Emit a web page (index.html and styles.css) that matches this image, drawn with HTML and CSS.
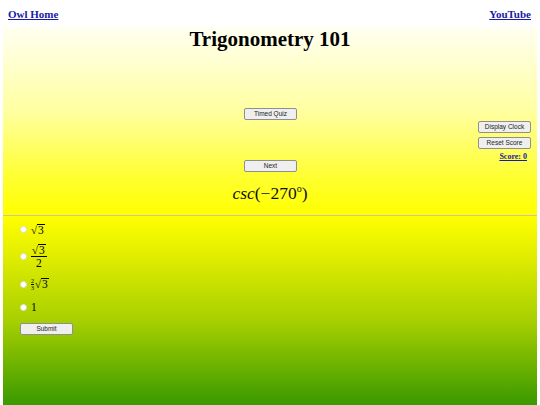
FILE: index.html
```html
<!DOCTYPE html>
<html>
<head>
<meta charset="utf-8">
<link rel="stylesheet" href="styles.css">
</head>
<body>
<div class="page">
  <header class="topbar">
    <a href="#" class="navlink">Owl Home</a>
    <a href="#" class="navlink">YouTube</a>
  </header>
  <section class="upper">
    <h1 class="title">Trigonometry 101</h1>
    <div class="controls">
      <div class="side"></div>
      <div class="center-col">
        <button class="btn">Timed Quiz</button>
        <button class="btn next">Next</button>
      </div>
      <div class="side right-col">
        <button class="btn">Display Clock</button>
        <button class="btn">Reset Score</button>
        <a href="#" class="score">Score: 0</a>
      </div>
    </div>
    <div class="question"><span class="it">csc</span>(−270<sup class="deg">o</sup>)</div>
  </section>
  <hr class="divider">
  <section class="lower">
    <ul class="answers">
      <li class="ans"><span class="radio"></span><span class="math"><span class="rad">√</span><span class="over">3</span></span></li>
      <li class="ans"><span class="radio"></span><span class="math frac"><span class="num"><span class="rad">√</span><span class="over">3</span></span><span class="den">2</span></span></li>
      <li class="ans"><span class="radio"></span><span class="math"><span class="sfrac"><span class="snum">2</span><span class="sden">3</span></span><span class="rad">√</span><span class="over">3</span></span></li>
      <li class="ans"><span class="radio"></span><span class="math">1</span></li>
    </ul>
    <button class="btn submit">Submit</button>
  </section>
</div>
</body>
</html>
```
FILE: styles.css
```css
html, body { margin: 0; padding: 0; }
body { background: #fff; font-family: "Liberation Serif", "Times New Roman", serif; }
.page { margin: 0 3px; height: 405px; overflow: hidden; display: flex; flex-direction: column; }
.topbar { height: 27px; display: flex; justify-content: space-between; align-items: flex-start; padding: 8px 6px 0 5px; box-sizing: border-box; background: #fff; }
.navlink { color: #1a1aa6; font-weight: bold; font-size: 11px; text-decoration: underline; }
.upper { background: linear-gradient(#fffff2 0%, #ffffa0 45%, #ffff30 80%, #ffff00 100%); height: 188px; display: flex; flex-direction: column; align-items: center; }
.title { margin: 0; font-size: 21px; font-weight: bold; line-height: 24px; color: #000; }
.controls { width: 100%; display: grid; grid-template-columns: 1fr 52px 1fr; margin-top: 57px; }
.center-col { display: flex; flex-direction: column; gap: 40px; }
.right-col { display: flex; flex-direction: column; align-items: flex-end; padding-top: 13px; padding-right: 6px; gap: 4px; }
.btn { width: 53px; height: 12px; padding: 0; font-family: "Liberation Sans", Arial, sans-serif; font-size: 6.5px; color: #222; background: #efefef; border: 1px solid #8f8f8f; border-radius: 2px; box-sizing: border-box; line-height: 10px; }
.score { color: #1a1aa6; font-weight: bold; font-size: 8px; text-decoration: underline; margin-right: 4px; margin-top: -1px; }
.question { margin-top: 11px; font-size: 17.5px; color: #111; }
.it { font-style: italic; }
.deg { font-size: 10px; vertical-align: 7px; line-height: 0; }
.divider { margin: 0; border: none; height: 1px; background: #c8c8a0; }
.lower { flex: 1; background: linear-gradient(#ffff00 0%, #e6f000 18%, #a8d000 55%, #3a9900 100%); padding: 1px 0 0 14px; }
.answers { list-style: none; margin: 0; padding: 0; }
.ans { display: flex; align-items: center; height: 28px; font-size: 11.5px; color: #000; }
.ans:first-child { height: 25px; }
.ans:nth-child(4) { height: 18px; }
.radio { width: 5px; height: 5px; border-radius: 50%; background: #fff; border: 1px solid #ddd; margin: 0 4px 0 3px; }
.math { display: inline-flex; align-items: center; }
.rad { font-size: 11px; }
.over { border-top: 1px solid #000; line-height: 11px; padding: 0 1px; }
.frac { flex-direction: column; align-items: center; }
.num { display: flex; border-bottom: 1px solid #000; padding: 0 1px; }
.den { line-height: 12px; }
.sfrac { display: inline-flex; flex-direction: column; align-items: center; font-size: 6px; line-height: 6px; margin-right: 1px; }
.snum { border-bottom: 0.5px solid #000; }
.submit { margin-top: 7px; margin-left: 3px; }
```
